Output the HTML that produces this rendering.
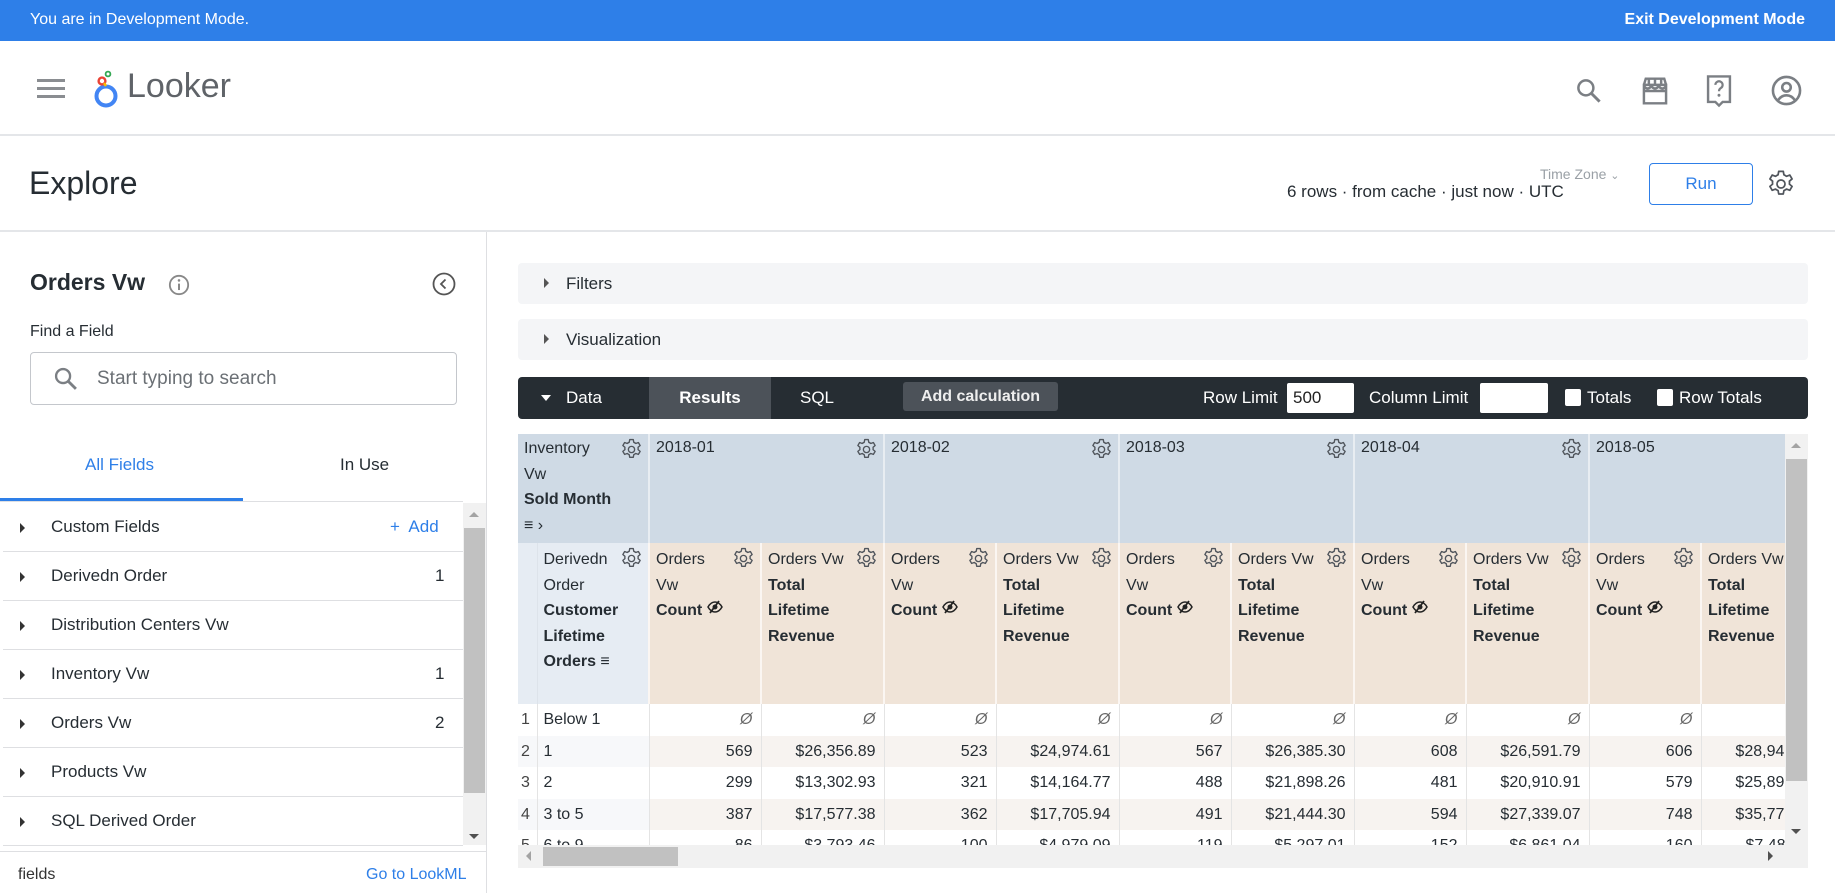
<!DOCTYPE html>
<html><head><meta charset="utf-8">
<style>
*{box-sizing:border-box;margin:0;padding:0}
body{width:1835px;height:893px;overflow:hidden;background:#fff;font-family:"Liberation Sans",Arial,sans-serif;color:#262d33;position:relative}
.a{position:absolute}
.dev{left:0;top:0;width:1835px;height:41px;background:#2e7fe8;color:#fff;font-size:16px}
.hdr{top:41px;left:0;width:1835px;height:95px;border-bottom:2px solid #e4e6e9}
.exp{top:136px;left:0;width:1835px;height:96px;border-bottom:2px solid #e4e6e9}
.side{top:232px;left:0;width:487px;height:661px;border-right:1px solid #dedfe2}
.row{left:3px;width:460px;height:49px;border-bottom:1px solid #dedfe2;font-size:17px;color:#262d33}
.tri{width:0;height:0;border-left:5px solid #333;border-top:5px solid transparent;border-bottom:5px solid transparent}
.bar{left:518px;width:1290px;height:41px;background:#f4f5f7;border-radius:4px;font-size:17px}
table{border-collapse:collapse;table-layout:fixed;font-size:16px;color:#262d33}
td{vertical-align:top;overflow:hidden;white-space:nowrap}
.ph{background:#cfdae5;border-right:2px solid #e8edf2;padding:5px 6px;height:108px;position:relative}
.mh{background:#f0e4d8;border-right:2px solid #fbf6f2;padding:4px 6px;line-height:25.5px;height:161px;position:relative}
.g{position:absolute;top:3px;right:4px;width:25px;height:25px}
.d td{height:31.6px;line-height:31px;text-align:right;padding:0 8px;border-right:1px solid #e4e4e4}
.d td.n{text-align:left;padding:0 3px;color:#444}
.d td.dm{text-align:left;padding:0 6px}
.d.o td{background:#fff}
.d.e td{background:#f7f3f0}
.d.e td.dm,.d.e td.n{background:#f7f8fa}
.null{color:#666;font-style:italic}
</style></head><body>
<svg width="0" height="0" style="position:absolute"><defs>
<g id="gear"><path d="M10.3 2.5h3.4l.5 2.6a7.3 7.3 0 0 1 1.9 1.1l2.5-.9 1.7 2.9-2 1.7a7.5 7.5 0 0 1 0 2.2l2 1.7-1.7 2.9-2.5-.9a7.3 7.3 0 0 1-1.9 1.1l-.5 2.6h-3.4l-.5-2.6a7.3 7.3 0 0 1-1.9-1.1l-2.5.9-1.7-2.9 2-1.7a7.5 7.5 0 0 1 0-2.2l-2-1.7 1.7-2.9 2.5.9a7.3 7.3 0 0 1 1.9-1.1z" fill="none" stroke="#50555c" stroke-width="1.3" stroke-linejoin="round"/><circle cx="12" cy="12" r="3" fill="none" stroke="#50555c" stroke-width="1.3"/></g>
<g id="eye"><path d="M1 8c2-3.5 4.5-5 7-5s5 1.5 7 5c-2 3.5-4.5 5-7 5S3 11.5 1 8z" fill="none" stroke="#222" stroke-width="1.5"/><circle cx="8" cy="8" r="2.5" fill="#222"/><path d="M3 14L12 2" stroke="#222" stroke-width="1.8"/></g>
</defs></svg>

<div class="a dev"><span class="a" style="left:30px;top:11px">You are in Development Mode.</span><b class="a" style="right:30px;top:11px">Exit Development Mode</b></div>

<div class="a hdr">
 <div class="a" style="left:37px;top:38px;width:28px;height:3px;background:#8a8d91;box-shadow:0 8px 0 #8a8d91,0 16px 0 #8a8d91"></div>
 <svg class="a" style="left:94px;top:28px" width="26" height="40" viewBox="0 0 26 40"><circle cx="12" cy="27" r="9.5" fill="none" stroke="#4285f4" stroke-width="4"/><circle cx="8" cy="12" r="3.4" fill="none" stroke="#ea4335" stroke-width="2.4"/><circle cx="14" cy="5" r="2.4" fill="none" stroke="#34a853" stroke-width="1.8"/><path d="M10 14l2 3" stroke="#fbbc04" stroke-width="2.5"/></svg>
 <div class="a" style="left:127px;top:26px;font-size:34px;color:#5f6368">Looker</div>
 <svg class="a" style="left:1574px;top:35px" width="30" height="30" viewBox="0 0 24 24"><circle cx="9.5" cy="9.5" r="6" fill="none" stroke="#7b7f84" stroke-width="2"/><path d="M14 14l6.5 6.5" stroke="#7b7f84" stroke-width="2.4"/></svg>
 <svg class="a" style="left:1640px;top:34px" width="30" height="32" viewBox="0 0 24 26"><path d="M3 8h18v15H3zM3 8l1.5-5h15L21 8M7 3v5M12 3v5M17 3v5M3 8c0 2 2 3 3 3s3-1 3-3c0 2 2 3 3 3s3-1 3-3c0 2 2 3 3 3s3-1 3-3M3 13h18" fill="none" stroke="#7b7f84" stroke-width="2"/></svg>
 <svg class="a" style="left:1705px;top:33px" width="28" height="34" viewBox="0 0 22 28"><path d="M2 2h18v21h-6l-3 3-3-3H2z" fill="none" stroke="#7b7f84" stroke-width="2"/><path d="M8 9a3 3 0 1 1 4.5 2.6c-1 .6-1.5 1.2-1.5 2.6" fill="none" stroke="#7b7f84" stroke-width="1.8"/><circle cx="11" cy="17.5" r="1.2" fill="#7b7f84"/></svg>
 <svg class="a" style="left:1771px;top:34px" width="31" height="31" viewBox="0 0 24 24"><circle cx="12" cy="12" r="10.5" fill="none" stroke="#7b7f84" stroke-width="2"/><circle cx="12" cy="9.5" r="3.3" fill="none" stroke="#7b7f84" stroke-width="2"/><path d="M5.5 19.5c2-3 4-3.8 6.5-3.8s4.5.8 6.5 3.8" fill="none" stroke="#7b7f84" stroke-width="2"/></svg>
</div>

<div class="a exp">
 <div class="a" style="left:29px;top:29px;font-size:32px;color:#262d33">Explore</div>
 <div class="a" style="left:1540px;top:30px;font-size:14px;color:#9aa0a6">Time Zone <span style="font-size:11px">&#8964;</span></div>
 <div class="a" style="left:1287px;top:46px;font-size:17px;color:#262d33">6 rows · from cache · just now · UTC</div>
 <div class="a" style="left:1649px;top:27px;width:104px;height:42px;border:1px solid #2e7fe8;border-radius:4px;color:#2e7fe8;font-size:17px;text-align:center;line-height:40px">Run</div>
 <svg class="a" style="left:1765px;top:32px" width="32" height="32" viewBox="0 0 24 24"><use href="#gear"/></svg>
</div>

<div class="a side">
 <div class="a" style="left:30px;top:37px;font-size:23px;color:#262d33;font-weight:bold;font-weight:600">Orders Vw</div>
 <svg class="a" style="left:168px;top:42px" width="22" height="22" viewBox="0 0 24 24"><circle cx="12" cy="12" r="10" fill="none" stroke="#888" stroke-width="2"/><path d="M12 10.5v7" stroke="#888" stroke-width="2.2"/><circle cx="12" cy="7" r="1.4" fill="#888"/></svg>
 <svg class="a" style="left:432px;top:40px" width="24" height="24" viewBox="0 0 24 24"><circle cx="12" cy="12" r="10.5" fill="none" stroke="#555" stroke-width="1.8"/><path d="M13.5 7.5L9 12l4.5 4.5" fill="none" stroke="#555" stroke-width="1.8"/></svg>
 <div class="a" style="left:30px;top:91px;font-size:16px">Find a Field</div>
 <div class="a" style="left:30px;top:120px;width:427px;height:53px;border:1px solid #c4c7cc;border-radius:4px"></div>
 <svg class="a" style="left:52px;top:133px" width="28" height="28" viewBox="0 0 24 24"><circle cx="9.5" cy="9.5" r="6" fill="none" stroke="#7b7f84" stroke-width="2"/><path d="M14 14l6.5 6.5" stroke="#7b7f84" stroke-width="2.4"/></svg>
 <div class="a" style="left:97px;top:136px;font-size:19px;color:#6b7075">Start typing to search</div>
 <div class="a" style="left:85px;top:223px;font-size:17px;color:#2e7fe8">All Fields</div>
 <div class="a" style="left:340px;top:223px;font-size:17px;color:#262d33">In Use</div>
 <div class="a" style="left:0;top:269px;width:463px;height:1px;background:#dedfe2"></div>
 <div class="a" style="left:0;top:266px;width:243px;height:3px;background:#2e7fe8"></div>
</div>
<div class="a row" style="top:503px"><div class="a tri" style="left:17px;top:20px"></div><span class="a" style="left:48px;top:14px">Custom Fields</span><span class="a" style="left:387px;top:14px;color:#2e7fe8">+&nbsp; Add</span></div>
<div class="a row" style="top:552px"><div class="a tri" style="left:17px;top:20px"></div><span class="a" style="left:48px;top:14px">Derivedn Order</span><span class="a" style="left:432px;top:14px">1</span></div>
<div class="a row" style="top:601px"><div class="a tri" style="left:17px;top:20px"></div><span class="a" style="left:48px;top:14px">Distribution Centers Vw</span></div>
<div class="a row" style="top:650px"><div class="a tri" style="left:17px;top:20px"></div><span class="a" style="left:48px;top:14px">Inventory Vw</span><span class="a" style="left:432px;top:14px">1</span></div>
<div class="a row" style="top:699px"><div class="a tri" style="left:17px;top:20px"></div><span class="a" style="left:48px;top:14px">Orders Vw</span><span class="a" style="left:432px;top:14px">2</span></div>
<div class="a row" style="top:748px"><div class="a tri" style="left:17px;top:20px"></div><span class="a" style="left:48px;top:14px">Products Vw</span></div>
<div class="a row" style="top:797px"><div class="a tri" style="left:17px;top:20px"></div><span class="a" style="left:48px;top:14px">SQL Derived Order</span></div>
<div class="a" style="left:463px;top:503px;width:23px;height:342px;background:#f1f1f1"></div>
<div class="a" style="left:464px;top:528px;width:21px;height:265px;background:#c1c1c1"></div>
<div class="a" style="left:469px;top:512px;border-left:5px solid transparent;border-right:5px solid transparent;border-bottom:5px solid #a3a3a3"></div>
<div class="a" style="left:469px;top:834px;border-left:5px solid transparent;border-right:5px solid transparent;border-top:5px solid #505050"></div>
<div class="a" style="left:0;top:851px;width:487px;height:1px;background:#dedfe2"></div>
<div class="a" style="left:18px;top:866px;font-size:16px;color:#333">fields</div>
<div class="a" style="left:366px;top:866px;font-size:16px;color:#2e7fe8">Go to LookML</div>

<div class="a bar" style="top:263px"><div class="a tri" style="left:26px;top:15px;border-left-color:#555"></div><span class="a" style="left:48px;top:11px">Filters</span></div>
<div class="a bar" style="top:319px"><div class="a tri" style="left:26px;top:15px;border-left-color:#555"></div><span class="a" style="left:48px;top:11px">Visualization</span></div>

<div class="a" style="left:518px;top:377px;width:1290px;height:42px;background:#262d33;border-radius:4px;color:#fff;font-size:17px">
 <div class="a" style="left:23px;top:18px;border-left:5px solid transparent;border-right:5px solid transparent;border-top:6px solid #fff"></div>
 <span class="a" style="left:48px;top:11px">Data</span>
 <div class="a" style="left:131px;top:0;width:122px;height:42px;background:#4c5259;text-align:center;line-height:42px;font-weight:bold">Results</div>
 <span class="a" style="left:282px;top:11px">SQL</span>
 <div class="a" style="left:385px;top:5px;width:155px;height:29px;background:#4c5259;border-radius:3px;text-align:center;line-height:29px;font-weight:bold;font-size:16px;color:#eee">Add calculation</div>
 <span class="a" style="left:685px;top:11px">Row Limit</span>
 <div class="a" style="left:769px;top:6px;width:67px;height:30px;background:#fff;border-radius:2px;color:#222;padding:5px 6px">500</div>
 <span class="a" style="left:851px;top:11px">Column Limit</span>
 <div class="a" style="left:962px;top:6px;width:68px;height:30px;background:#fff;border-radius:2px"></div>
 <div class="a" style="left:1047px;top:12px;width:16px;height:17px;background:#fff;border-radius:2px"></div>
 <span class="a" style="left:1069px;top:11px">Totals</span>
 <div class="a" style="left:1139px;top:12px;width:16px;height:17px;background:#fff;border-radius:2px"></div>
 <span class="a" style="left:1161px;top:11px">Row Totals</span>
</div>

<div class="a" style="left:518px;top:434px;width:1267px;height:411px;overflow:hidden">
<table style="width:1306px">
<colgroup><col style="width:19px"><col style="width:112px"><col style="width:112px"><col style="width:123px"><col style="width:112px"><col style="width:123px"><col style="width:112px"><col style="width:123px"><col style="width:112px"><col style="width:123px"><col style="width:112px"><col style="width:123px"></colgroup>
<tr>
<td colspan="2" class="ph" style="line-height:25.5px;padding-top:2px">Inventory<br>Vw<br><b>Sold Month</b><br><span style="font-size:16px">&#8801; &rsaquo;</span><svg class="g" viewBox="0 0 24 24"><use href="#gear"/></svg></td>
<td colspan="2" class="ph">2018-01<svg class="g" viewBox="0 0 24 24"><use href="#gear"/></svg></td>
<td colspan="2" class="ph">2018-02<svg class="g" viewBox="0 0 24 24"><use href="#gear"/></svg></td>
<td colspan="2" class="ph">2018-03<svg class="g" viewBox="0 0 24 24"><use href="#gear"/></svg></td>
<td colspan="2" class="ph">2018-04<svg class="g" viewBox="0 0 24 24"><use href="#gear"/></svg></td>
<td colspan="2" class="ph">2018-05<svg class="g" viewBox="0 0 24 24"><use href="#gear"/></svg></td>
</tr>
<tr>
<td class="mh" style="background:#e6ecf3;border-right:1px solid #dde3ea"></td>
<td class="mh" style="background:#e6ecf3">Derivedn<br>Order<br><b>Customer<br>Lifetime<br>Orders</b> &#8801;<svg class="g" viewBox="0 0 24 24"><use href="#gear"/></svg></td>
<td class="mh">Orders<br>Vw<br><b>Count</b> <svg width="16" height="16" viewBox="0 0 16 16"><use href="#eye"/></svg><svg class="g" viewBox="0 0 24 24"><use href="#gear"/></svg></td>
<td class="mh">Orders Vw<br><b>Total<br>Lifetime<br>Revenue</b><svg class="g" viewBox="0 0 24 24"><use href="#gear"/></svg></td>
<td class="mh">Orders<br>Vw<br><b>Count</b> <svg width="16" height="16" viewBox="0 0 16 16"><use href="#eye"/></svg><svg class="g" viewBox="0 0 24 24"><use href="#gear"/></svg></td>
<td class="mh">Orders Vw<br><b>Total<br>Lifetime<br>Revenue</b><svg class="g" viewBox="0 0 24 24"><use href="#gear"/></svg></td>
<td class="mh">Orders<br>Vw<br><b>Count</b> <svg width="16" height="16" viewBox="0 0 16 16"><use href="#eye"/></svg><svg class="g" viewBox="0 0 24 24"><use href="#gear"/></svg></td>
<td class="mh">Orders Vw<br><b>Total<br>Lifetime<br>Revenue</b><svg class="g" viewBox="0 0 24 24"><use href="#gear"/></svg></td>
<td class="mh">Orders<br>Vw<br><b>Count</b> <svg width="16" height="16" viewBox="0 0 16 16"><use href="#eye"/></svg><svg class="g" viewBox="0 0 24 24"><use href="#gear"/></svg></td>
<td class="mh">Orders Vw<br><b>Total<br>Lifetime<br>Revenue</b><svg class="g" viewBox="0 0 24 24"><use href="#gear"/></svg></td>
<td class="mh">Orders<br>Vw<br><b>Count</b> <svg width="16" height="16" viewBox="0 0 16 16"><use href="#eye"/></svg><svg class="g" viewBox="0 0 24 24"><use href="#gear"/></svg></td>
<td class="mh">Orders Vw<br><b>Total<br>Lifetime<br>Revenue</b></td>
</tr>
<tr class="d o"><td class="n">1</td><td class="dm">Below 1</td><td class="null">Ø</td><td class="null">Ø</td><td class="null">Ø</td><td class="null">Ø</td><td class="null">Ø</td><td class="null">Ø</td><td class="null">Ø</td><td class="null">Ø</td><td class="null">Ø</td><td class="null">Ø</td></tr>
<tr class="d e"><td class="n">2</td><td class="dm">1</td><td>569</td><td>$26,356.89</td><td>523</td><td>$24,974.61</td><td>567</td><td>$26,385.30</td><td>608</td><td>$26,591.79</td><td>606</td><td>$28,945.12</td></tr>
<tr class="d o"><td class="n">3</td><td class="dm">2</td><td>299</td><td>$13,302.93</td><td>321</td><td>$14,164.77</td><td>488</td><td>$21,898.26</td><td>481</td><td>$20,910.91</td><td>579</td><td>$25,897.40</td></tr>
<tr class="d e"><td class="n">4</td><td class="dm">3 to 5</td><td>387</td><td>$17,577.38</td><td>362</td><td>$17,705.94</td><td>491</td><td>$21,444.30</td><td>594</td><td>$27,339.07</td><td>748</td><td>$35,772.10</td></tr>
<tr class="d o"><td class="n">5</td><td class="dm">6 to 9</td><td>86</td><td>$3,793.46</td><td>100</td><td>$4,979.09</td><td>119</td><td>$5,297.01</td><td>152</td><td>$6,861.04</td><td>160</td><td>$7,480.11</td></tr>
</table>
</div>
<div class="a" style="left:518px;top:845px;width:1267px;height:23px;background:#f1f1f1"></div>
<div class="a" style="left:543px;top:847px;width:135px;height:19px;background:#c1c1c1"></div>
<div class="a" style="left:526px;top:851px;border-top:5px solid transparent;border-bottom:5px solid transparent;border-right:5px solid #a3a3a3"></div>
<div class="a" style="left:1768px;top:851px;border-top:5px solid transparent;border-bottom:5px solid transparent;border-left:5px solid #505050"></div>
<div class="a" style="left:1785px;top:434px;width:23px;height:434px;background:#f1f1f1"></div>
<div class="a" style="left:1786px;top:459px;width:21px;height:322px;background:#c1c1c1"></div>
<div class="a" style="left:1791px;top:443px;border-left:5px solid transparent;border-right:5px solid transparent;border-bottom:5px solid #a3a3a3"></div>
<div class="a" style="left:1791px;top:829px;border-left:5px solid transparent;border-right:5px solid transparent;border-top:5px solid #505050"></div>
</body></html>
